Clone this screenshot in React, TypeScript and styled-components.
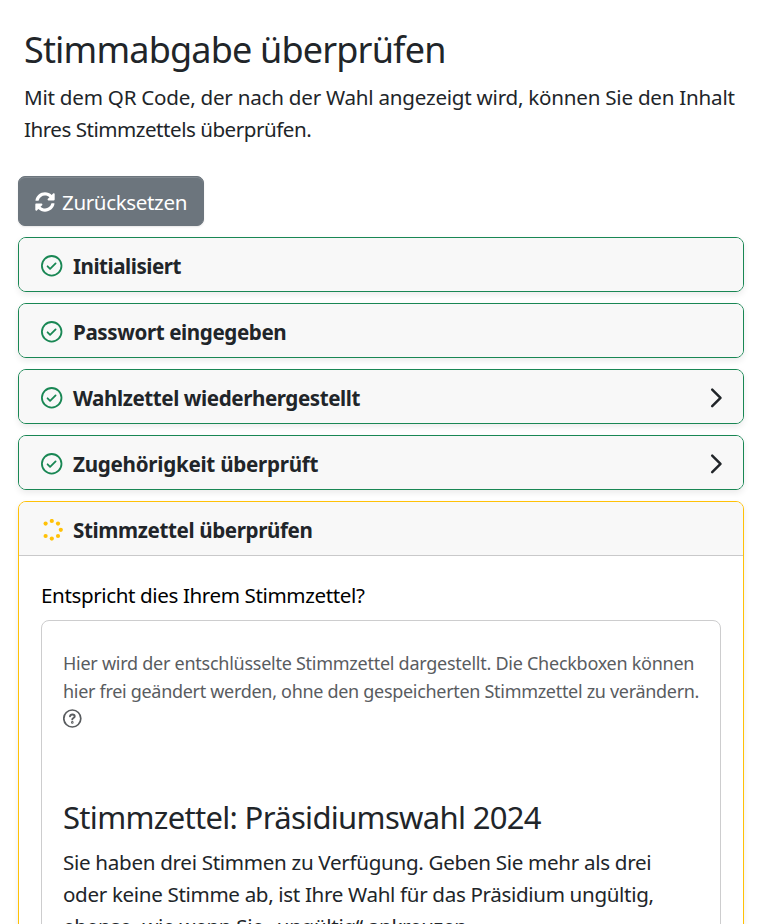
import React from 'react';
import styled, { createGlobalStyle } from 'styled-components';
import { FaSyncAlt } from 'react-icons/fa';

const GlobalStyle = createGlobalStyle`
  *, *::before, *::after { box-sizing: border-box; }
  html, body { height: 100%; overflow: hidden; }
  body { margin: 0; background: #fff; color: #212529; font: 400 20.6px/32px "Noto Sans", sans-serif; }
  h1, h2, h3, p { margin: 0; font-weight: 400; }
  svg { display: block; flex: none; }
`;

const Page = styled.main`
  display: flex;
  flex-direction: column;
  padding: 28px 18px 0;
`;

const Intro = styled.header`
  padding-left: 6px;
  margin-bottom: 31px;
`;

const Title = styled.h1`
  font-size: 36px;
  line-height: 44px;
  letter-spacing: -0.82px;
  margin-bottom: 9px;
`;

const Line = styled.span<{ $track: number }>`
  display: block;
  white-space: nowrap;
  letter-spacing: ${(p) => p.$track}px;
`;

const ResetButton = styled.button`
  display: flex;
  align-items: center;
  align-self: flex-start;
  gap: 7px;
  width: 186px;
  height: 50px;
  margin-bottom: 11px;
  padding: 2px 0 0 16px;
  border: 1px solid #6c757d;
  border-radius: 7px;
  background: #6c757d;
  color: #fff;
  font: inherit;
  letter-spacing: -0.38px;
  box-shadow: inset 0 1px 0 rgba(255, 255, 255, 0.15), 0 1px 2px rgba(0, 0, 0, 0.1);
`;

const Steps = styled.div`
  display: grid;
  gap: 11px;
`;

const Card = styled.section<{ $active?: boolean }>`
  border: 1px solid ${(p) => (p.$active ? '#ffc107' : '#198754')};
  border-radius: 8px;
  background: #fff;
  box-shadow: 0 3px 6px rgba(0, 0, 0, 0.08);
`;

const CardHeader = styled.div<{ $open?: boolean }>`
  display: flex;
  align-items: center;
  justify-content: space-between;
  height: ${(p) => (p.$open ? 54 : 53)}px;
  padding: 2px 20px 0 22px;
  border-radius: ${(p) => (p.$open ? '7px 7px 0 0' : '7px')};
  background: #f8f8f8;
  border-bottom: ${(p) => (p.$open ? '1px solid #c9c9ca' : '0')};
`;

const StepLabel = styled.div`
  display: flex;
  align-items: center;
  gap: 10px;
`;

const StepName = styled.h2<{ $track: number }>`
  padding-top: 1px;
  font-size: 20.6px;
  font-weight: 700;
  line-height: 32px;
  letter-spacing: ${(p) => p.$track}px;
`;

const CardBody = styled.div`
  padding: 23px 22px 40px;
`;

const Question = styled.p`
  color: #000;
  margin-bottom: 9px;
`;

const Ballot = styled.div`
  padding: 28px 21px 40px;
  border: 1px solid #cdcdce;
  border-radius: 8px;
`;

const Note = styled.div`
  margin-bottom: 67px;
  color: #595c5f;
  font-size: 18px;
  line-height: 28px;
`;

const HelpRow = styled.div`
  display: flex;
  align-items: center;
  height: 26px;
`;

const BallotTitle = styled.h3`
  margin-bottom: 10px;
  font-size: 31px;
  line-height: 38px;
  letter-spacing: -0.68px;
`;

const CheckIcon = () => (
  <svg width="22" height="22" viewBox="0 0 22 22" fill="none" stroke="#198754" strokeWidth="1.8" strokeLinecap="round" strokeLinejoin="round">
    <circle cx="10.7" cy="10.8" r="9.8" />
    <path d="M6.600 11.300l2.500 2.500 5.500-5.400" />
  </svg>
);

const dots = [[10.8, 2], [17, 4.6], [19.8, 10.8], [17, 17], [10.8, 19.6], [4.6, 17], [4.6, 4.6]];

const SpinnerIcon = () => (
  <svg width="22" height="22" viewBox="0 0 22 22" fill="#ffc107">
    {dots.map(([x, y]) => <circle key={`${x}-${y}`} cx={x} cy={y} r="2.1" />)}
  </svg>
);

const ChevronIcon = () => (
  <svg width="13" height="22" viewBox="0 0 13 22" fill="none" stroke="#212529" strokeWidth="2.5" strokeLinecap="round" strokeLinejoin="round">
    <path d="M2.200 2.700l8.300 8.200-8.300 8.200" />
  </svg>
);

const HelpIcon = () => (
  <svg width="19" height="19" viewBox="0 0 19 19" fill="none" stroke="#595c5f" strokeWidth="1.7" strokeLinecap="round" strokeLinejoin="round">
    <circle cx="9.3" cy="9.5" r="8.5" />
    <path d="M7 7.300c.2-1.200 1.100-1.800 2.400-1.800s2.300.7 2.300 1.900c0 1.600-2.400 1.500-2.400 3" strokeWidth="1.900" />
    <circle cx="9.300" cy="13.400" r=".45" />
  </svg>
);

const steps = [
  { name: 'Initialisiert', track: -0.48, more: false },
  { name: 'Passwort eingegeben', track: -0.4, more: false },
  { name: 'Wahlzettel wiederhergestellt', track: -0.42, more: true },
  { name: 'Zugehörigkeit überprüft', track: -0.26, more: true },
];

export default function App() {
  return (
    <Page>
      <GlobalStyle />
      <Intro>
        <Title>Stimmabgabe überprüfen</Title>
        <p>
          <Line $track={-0.235}>Mit dem QR Code, der nach der Wahl angezeigt wird, können Sie den Inhalt</Line>
          <Line $track={-0.49}>Ihres Stimmzettels überprüfen.</Line>
        </p>
      </Intro>
      <ResetButton><FaSyncAlt size={20} />Zurücksetzen</ResetButton>
      <Steps>
        {steps.map((s) => (
          <Card key={s.name}>
            <CardHeader>
              <StepLabel><CheckIcon /><StepName $track={s.track}>{s.name}</StepName></StepLabel>
              {s.more && <ChevronIcon />}
            </CardHeader>
          </Card>
        ))}
        <Card $active>
          <CardHeader $open>
            <StepLabel><SpinnerIcon /><StepName $track={-0.38}>Stimmzettel überprüfen</StepName></StepLabel>
          </CardHeader>
          <CardBody>
            <Question><Line $track={-0.39}>Entspricht dies Ihrem Stimmzettel?</Line></Question>
            <Ballot>
              <Note>
                <Line $track={-0.26}>Hier wird der entschlüsselte Stimmzettel dargestellt. Die Checkboxen können</Line>
                <Line $track={-0.305}>hier frei geändert werden, ohne den gespeicherten Stimmzettel zu verändern.</Line>
                <HelpRow><HelpIcon /></HelpRow>
              </Note>
              <BallotTitle>Stimmzettel: Präsidiumswahl 2024</BallotTitle>
              <p>
                <Line $track={-0.305}>Sie haben drei Stimmen zu Verfügung. Geben Sie mehr als drei</Line>
                <Line $track={-0.34}>oder keine Stimme ab, ist Ihre Wahl für das Präsidium ungültig,</Line>
                <Line $track={-0.33}>ebenso, wie wenn Sie „ungültig“ ankreuzen.</Line>
              </p>
            </Ballot>
          </CardBody>
        </Card>
      </Steps>
    </Page>
  );
}
